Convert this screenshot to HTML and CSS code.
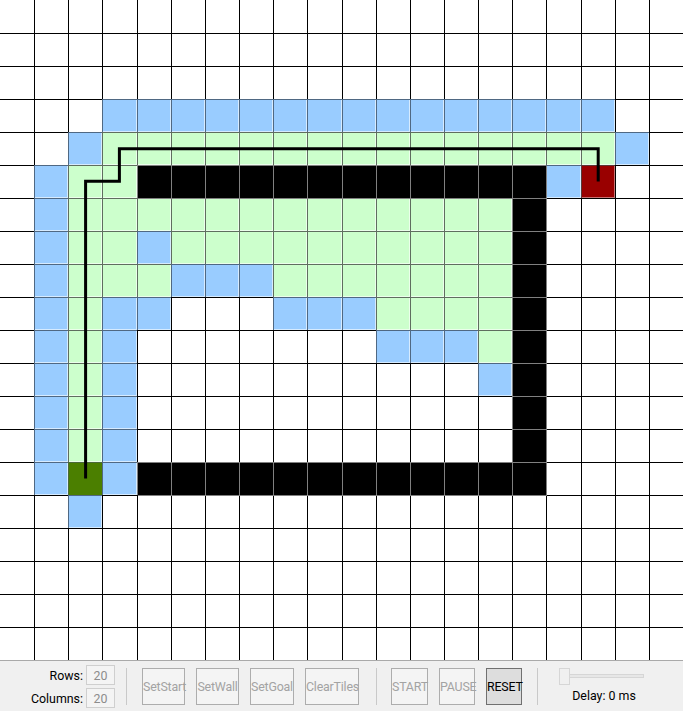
FILE: index.html
```html
<!DOCTYPE html>
<html lang="en">
<head>
<meta charset="utf-8">
<title>Path Finder</title>
<link rel="stylesheet" href="styles.css">
</head>
<body>
<div class="board">
  <div class="grid">
    <span class="c"></span><span class="c"></span><span class="c"></span><span class="c"></span><span class="c"></span><span class="c"></span><span class="c"></span><span class="c"></span><span class="c"></span><span class="c"></span><span class="c"></span><span class="c"></span><span class="c"></span><span class="c"></span><span class="c"></span><span class="c"></span><span class="c"></span><span class="c"></span><span class="c"></span><span class="c"></span>
    <span class="c"></span><span class="c"></span><span class="c"></span><span class="c"></span><span class="c"></span><span class="c"></span><span class="c"></span><span class="c"></span><span class="c"></span><span class="c"></span><span class="c"></span><span class="c"></span><span class="c"></span><span class="c"></span><span class="c"></span><span class="c"></span><span class="c"></span><span class="c"></span><span class="c"></span><span class="c"></span>
    <span class="c"></span><span class="c"></span><span class="c"></span><span class="c"></span><span class="c"></span><span class="c"></span><span class="c"></span><span class="c"></span><span class="c"></span><span class="c"></span><span class="c"></span><span class="c"></span><span class="c"></span><span class="c"></span><span class="c"></span><span class="c"></span><span class="c"></span><span class="c"></span><span class="c"></span><span class="c"></span>
    <span class="c"></span><span class="c"></span><span class="c"></span><span class="c b"></span><span class="c b"></span><span class="c b"></span><span class="c b"></span><span class="c b"></span><span class="c b"></span><span class="c b"></span><span class="c b"></span><span class="c b"></span><span class="c b"></span><span class="c b"></span><span class="c b"></span><span class="c b"></span><span class="c b"></span><span class="c b"></span><span class="c"></span><span class="c"></span>
    <span class="c"></span><span class="c"></span><span class="c b"></span><span class="c g"></span><span class="c g"></span><span class="c g"></span><span class="c g"></span><span class="c g"></span><span class="c g"></span><span class="c g"></span><span class="c g"></span><span class="c g"></span><span class="c g"></span><span class="c g"></span><span class="c g"></span><span class="c g"></span><span class="c g"></span><span class="c g"></span><span class="c b"></span><span class="c"></span>
    <span class="c"></span><span class="c b"></span><span class="c g"></span><span class="c g"></span><span class="c k"></span><span class="c k"></span><span class="c k"></span><span class="c k"></span><span class="c k"></span><span class="c k"></span><span class="c k"></span><span class="c k"></span><span class="c k"></span><span class="c k"></span><span class="c k"></span><span class="c k"></span><span class="c b"></span><span class="c e"></span><span class="c"></span><span class="c"></span>
    <span class="c"></span><span class="c b"></span><span class="c g"></span><span class="c g"></span><span class="c g"></span><span class="c g"></span><span class="c g"></span><span class="c g"></span><span class="c g"></span><span class="c g"></span><span class="c g"></span><span class="c g"></span><span class="c g"></span><span class="c g"></span><span class="c g"></span><span class="c k"></span><span class="c"></span><span class="c"></span><span class="c"></span><span class="c"></span>
    <span class="c"></span><span class="c b"></span><span class="c g"></span><span class="c g"></span><span class="c b"></span><span class="c g"></span><span class="c g"></span><span class="c g"></span><span class="c g"></span><span class="c g"></span><span class="c g"></span><span class="c g"></span><span class="c g"></span><span class="c g"></span><span class="c g"></span><span class="c k"></span><span class="c"></span><span class="c"></span><span class="c"></span><span class="c"></span>
    <span class="c"></span><span class="c b"></span><span class="c g"></span><span class="c g"></span><span class="c g"></span><span class="c b"></span><span class="c b"></span><span class="c b"></span><span class="c g"></span><span class="c g"></span><span class="c g"></span><span class="c g"></span><span class="c g"></span><span class="c g"></span><span class="c g"></span><span class="c k"></span><span class="c"></span><span class="c"></span><span class="c"></span><span class="c"></span>
    <span class="c"></span><span class="c b"></span><span class="c g"></span><span class="c b"></span><span class="c b"></span><span class="c"></span><span class="c"></span><span class="c"></span><span class="c b"></span><span class="c b"></span><span class="c b"></span><span class="c g"></span><span class="c g"></span><span class="c g"></span><span class="c g"></span><span class="c k"></span><span class="c"></span><span class="c"></span><span class="c"></span><span class="c"></span>
    <span class="c"></span><span class="c b"></span><span class="c g"></span><span class="c b"></span><span class="c"></span><span class="c"></span><span class="c"></span><span class="c"></span><span class="c"></span><span class="c"></span><span class="c"></span><span class="c b"></span><span class="c b"></span><span class="c b"></span><span class="c g"></span><span class="c k"></span><span class="c"></span><span class="c"></span><span class="c"></span><span class="c"></span>
    <span class="c"></span><span class="c b"></span><span class="c g"></span><span class="c b"></span><span class="c"></span><span class="c"></span><span class="c"></span><span class="c"></span><span class="c"></span><span class="c"></span><span class="c"></span><span class="c"></span><span class="c"></span><span class="c"></span><span class="c b"></span><span class="c k"></span><span class="c"></span><span class="c"></span><span class="c"></span><span class="c"></span>
    <span class="c"></span><span class="c b"></span><span class="c g"></span><span class="c b"></span><span class="c"></span><span class="c"></span><span class="c"></span><span class="c"></span><span class="c"></span><span class="c"></span><span class="c"></span><span class="c"></span><span class="c"></span><span class="c"></span><span class="c"></span><span class="c k"></span><span class="c"></span><span class="c"></span><span class="c"></span><span class="c"></span>
    <span class="c"></span><span class="c b"></span><span class="c g"></span><span class="c b"></span><span class="c"></span><span class="c"></span><span class="c"></span><span class="c"></span><span class="c"></span><span class="c"></span><span class="c"></span><span class="c"></span><span class="c"></span><span class="c"></span><span class="c"></span><span class="c k"></span><span class="c"></span><span class="c"></span><span class="c"></span><span class="c"></span>
    <span class="c"></span><span class="c b"></span><span class="c s"></span><span class="c b"></span><span class="c k"></span><span class="c k"></span><span class="c k"></span><span class="c k"></span><span class="c k"></span><span class="c k"></span><span class="c k"></span><span class="c k"></span><span class="c k"></span><span class="c k"></span><span class="c k"></span><span class="c k"></span><span class="c"></span><span class="c"></span><span class="c"></span><span class="c"></span>
    <span class="c"></span><span class="c"></span><span class="c b"></span><span class="c"></span><span class="c"></span><span class="c"></span><span class="c"></span><span class="c"></span><span class="c"></span><span class="c"></span><span class="c"></span><span class="c"></span><span class="c"></span><span class="c"></span><span class="c"></span><span class="c"></span><span class="c"></span><span class="c"></span><span class="c"></span><span class="c"></span>
    <span class="c"></span><span class="c"></span><span class="c"></span><span class="c"></span><span class="c"></span><span class="c"></span><span class="c"></span><span class="c"></span><span class="c"></span><span class="c"></span><span class="c"></span><span class="c"></span><span class="c"></span><span class="c"></span><span class="c"></span><span class="c"></span><span class="c"></span><span class="c"></span><span class="c"></span><span class="c"></span>
    <span class="c"></span><span class="c"></span><span class="c"></span><span class="c"></span><span class="c"></span><span class="c"></span><span class="c"></span><span class="c"></span><span class="c"></span><span class="c"></span><span class="c"></span><span class="c"></span><span class="c"></span><span class="c"></span><span class="c"></span><span class="c"></span><span class="c"></span><span class="c"></span><span class="c"></span><span class="c"></span>
    <span class="c"></span><span class="c"></span><span class="c"></span><span class="c"></span><span class="c"></span><span class="c"></span><span class="c"></span><span class="c"></span><span class="c"></span><span class="c"></span><span class="c"></span><span class="c"></span><span class="c"></span><span class="c"></span><span class="c"></span><span class="c"></span><span class="c"></span><span class="c"></span><span class="c"></span><span class="c"></span>
    <span class="c"></span><span class="c"></span><span class="c"></span><span class="c"></span><span class="c"></span><span class="c"></span><span class="c"></span><span class="c"></span><span class="c"></span><span class="c"></span><span class="c"></span><span class="c"></span><span class="c"></span><span class="c"></span><span class="c"></span><span class="c"></span><span class="c"></span><span class="c"></span><span class="c"></span><span class="c"></span>
  </div>
  <svg class="path" width="683" height="660" viewBox="0 0 683 660" aria-hidden="true">
    <polyline points="85.6,478.5 85.6,181.3 119.4,181.3 119.4,148.7 598.2,148.7 598.2,181.5" fill="none" stroke="#000" stroke-width="3" stroke-linejoin="miter"/>
  </svg>
</div>
<div class="toolbar">
  <div class="sizes">
    <span class="lbl">Rows:</span><span class="box">20</span>
    <span class="lbl">Columns:</span><span class="box">20</span>
  </div>
  <div class="sep sep-a"></div>
  <div class="group group-edit">
    <button class="btn btn-setstart" disabled>SetStart</button>
    <button class="btn btn-setwall" disabled>SetWall</button>
    <button class="btn btn-setgoal" disabled>SetGoal</button>
    <button class="btn btn-clear" disabled>ClearTiles</button>
  </div>
  <div class="sep sep-b"></div>
  <div class="group group-run">
    <button class="btn btn-start" disabled>START</button>
    <button class="btn btn-pause" disabled>PAUSE</button>
    <button class="btn btn-reset on">RESET</button>
  </div>
  <div class="sep sep-c"></div>
  <div class="delay">
    <div class="slider">
      <div class="track"></div>
      <div class="thumb"></div>
    </div>
    <div class="delay-text">Delay: 0 ms</div>
  </div>
</div>
</body>
</html>
```

FILE: styles.css
```css
* { box-sizing: border-box; }
html, body { margin: 0; padding: 0; }
body {
  width: 683px;
  height: 711px;
  overflow: hidden;
  background: #fff;
  font-family: Roboto, "Noto Sans", "Liberation Sans", sans-serif;
  font-size: 12.4px;
}

/* ---------- board ---------- */
.board {
  position: relative;
  width: 683px;
  height: 660px;
}
.grid {
  display: grid;
  grid-template-columns: repeat(20, 1fr);
  grid-template-rows: repeat(20, 33px);
  width: 683px;
  height: 660px;
}
.c {
  display: block;
  background: #fff;
  border-left: 1px solid #000;
  border-top: 1px solid #000;
}
.c:nth-child(20n+1) { border-left-width: 0; }
.c:nth-child(-n+20) { border-top-width: 0; }

.b {
  background: #99ccff;
  border-color: #4f6883;
  box-shadow: inset -1px -1px 0 rgba(255, 255, 255, 0.6);
}
.g {
  background: #ccffcc;
  border-color: #5f6e5f;
  box-shadow: inset -1px -1px 0 rgba(255, 255, 255, 0.6);
}
.k {
  position: relative;
  background: #000;
  border-color: #808080;
  box-shadow: 1px 1px 0 #808080;
}
.s {
  background: #4b7f00;
  border-color: #4a6a3a;
}
.e {
  background: #990000;
  border-color: #5a3838;
  box-shadow: inset -1px -1px 0 rgba(255, 255, 255, 0.45);
}

.path {
  position: absolute;
  left: 0;
  top: 0;
  display: block;
}

/* ---------- toolbar ---------- */
.toolbar {
  display: flex;
  align-items: flex-start;
  height: 51px;
  background: #f0f0f0;
  border-top: 1px solid #a9a9a9;
  color: #000;
}
.sizes {
  display: grid;
  grid-template-columns: 83px 29px;
  column-gap: 3px;
  row-gap: 3px;
  margin-top: 4px;
}
.lbl {
  text-align: right;
  line-height: 20px;
  height: 20px;
  padding-top: 1px;
}
.box {
  height: 20px;
  border: 1px solid #cfcfcf;
  background: #f4f4f4;
  color: #8c8c8c;
  text-align: center;
  line-height: 19px;
}
.sep {
  width: 1px;
  height: 37px;
  margin-top: 7px;
  background: #c9c9c9;
}
.sep-a { margin-left: 11px; margin-right: 15px; }
.sep-b { margin-left: 17px; margin-right: 14px; }
.sep-c { margin-left: 15px; margin-right: 21px; }

.group {
  display: flex;
  gap: 11px;
  margin-top: 7px;
}
.btn {
  height: 37px;
  padding: 0;
  font: inherit;
  letter-spacing: -0.2px;
  border: 1px solid #adadad;
  background: #f4f4f4;
  color: #a3a3a3;
  text-align: center;
  white-space: nowrap;
}
.btn.on {
  background: #dddddd;
  border-color: #707070;
  color: #000;
}
.btn-setstart { width: 43px; }
.btn-setwall { width: 43px; }
.btn-setgoal { width: 44px; }
.btn-clear { width: 54px; }
.btn-start { width: 37px; }
.btn-pause { width: 36px; }
.btn-reset { width: 36px; }

.delay {
  width: 90px;
  margin-top: 7px;
}
.slider {
  position: relative;
  width: 85px;
  height: 16px;
}
.track {
  position: relative;
  top: 6px;
  height: 4px;
  margin-left: 8px;
  background: #e7e7e7;
  border: 1px solid #d6d6d6;
}
.thumb {
  position: absolute;
  left: 0;
  top: 0;
  width: 11px;
  height: 17px;
  background: #f0f0f0;
  border: 1px solid #d6d6d6;
}
.delay-text {
  margin-top: 4px;
  line-height: 16px;
  text-align: center;
}
```
